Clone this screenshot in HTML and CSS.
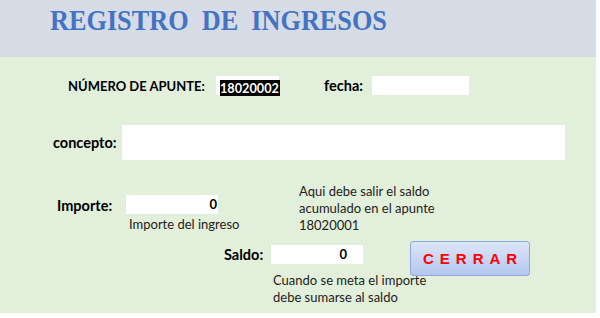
FILE: index.html
```html
<!DOCTYPE html>
<html lang="es">
<head>
    <meta charset="UTF-8">
    <title>Registro de ingresos</title>
    <link rel="stylesheet" href="styles.css">
</head>
<body>
    <div class="sheet">
        <div class="header">
            <h1>REGISTRO&nbsp; DE&nbsp; INGRESOS</h1>
        </div>
        <div class="form">
            <div class="row row-apunte">
                <div class="label apunte-label">NÚMERO DE APUNTE:</div>
                <div class="cell apunte-cell"><span class="selected">18020002</span></div>
                <div class="label fecha-label">fecha:</div>
                <div class="cell fecha-cell"></div>
            </div>
            <div class="row row-concepto">
                <div class="label concepto-label">concepto:</div>
                <div class="cell concepto-cell"></div>
            </div>
            <div class="row row-importe">
                <div class="importe-group">
                    <div class="label importe-label">Importe:</div>
                    <div class="cell num-cell">0</div>
                    <div class="caption importe-caption">Importe del ingreso</div>
                </div>
                <div class="note">Aqui debe salir el saldo<br>acumulado en el apunte<br>18020001</div>
            </div>
            <div class="row row-saldo">
                <div class="saldo-group">
                    <div class="label saldo-label">Saldo:</div>
                    <div class="cell num-cell">0</div>
                    <div class="caption saldo-caption">Cuando se meta el importe<br>debe sumarse al saldo</div>
                </div>
                <button class="close-btn">CERRAR</button>
            </div>
        </div>
    </div>
</body>
</html>
```
FILE: styles.css
```css
body {
    margin: 0;
    padding: 0;
    background-color: #ffffff;
    font-family: Lato, "Open Sans", sans-serif;
    color: #1a1a1a;
}
.sheet {
    width: 596px;
}
.header {
    height: 57px;
    box-sizing: border-box;
    background-color: #d6dce5;
    padding: 3px 0 0 50px;
}
.header h1 {
    margin: 0;
    font-family: "Liberation Serif", serif;
    font-weight: bold;
    font-size: 30px;
    white-space: nowrap;
    color: #4472c4;
    transform: scaleX(0.875);
    transform-origin: left center;
}
.form {
    height: 256px;
    box-sizing: border-box;
    background-color: #e2efda;
    padding-top: 19px;
}
.row {
    display: flex;
}
.label {
    font-weight: bold;
    font-size: 14.5px;
    color: #000;
}
.cell {
    background-color: #fff;
    height: 19px;
    box-sizing: border-box;
}
.caption, .note {
    font-size: 13px;
    line-height: 17px;
    color: #222;
}

/* numero de apunte / fecha */
.row-apunte {
    align-items: center;
    padding-left: 68px;
}
.apunte-label {
    width: 148px;
    font-size: 13px;
}
.apunte-cell {
    width: 63px;
    padding: 1px 0 0 4px;
}
.selected {
    display: inline-block;
    background-color: #000;
    color: #fff;
    font-weight: bold;
    font-size: 12.7px;
    line-height: 16px;
    padding: 0 1px 0 0;
}
.fecha-label {
    margin-left: 45px;
    width: 48px;
}
.fecha-cell {
    width: 97px;
}

/* concepto */
.row-concepto {
    align-items: center;
    margin-top: 30px;
    padding-left: 53px;
}
.concepto-label {
    width: 69px;
}
.concepto-cell {
    width: 443px;
    height: 35px;
}

/* importe */
.row-importe {
    margin-top: 23px;
    align-items: flex-start;
}
.importe-group {
    display: grid;
    grid-template-columns: 69px 92px;
    align-items: center;
    margin-top: 11px;
    padding-left: 57px;
}
.importe-label {
    padding-top: 3px;
}
.num-cell {
    width: 92px;
    text-align: right;
    padding-right: 16px;
    font-weight: bold;
    font-size: 13px;
    line-height: 19px;
    color: #000;
}
.importe-group .num-cell {
    padding-right: 1px;
}
.importe-caption {
    grid-column: 2;
    padding: 2px 0 0 3px;
    white-space: nowrap;
}
.note {
    margin-left: 81px;
}

/* saldo */
.row-saldo {
    margin-top: 7px;
    padding-left: 224px;
    align-items: flex-start;
}
.saldo-group {
    display: grid;
    grid-template-columns: 47px 92px;
    align-items: center;
    margin-top: 4px;
}
.saldo-caption {
    grid-column: 2;
    padding: 8px 0 0 2px;
    white-space: nowrap;
}
.close-btn {
    margin-left: 47px;
    width: 120px;
    height: 35px;
    border: 1px solid #8eaadb;
    border-radius: 3px;
    background: linear-gradient(#dde6f8, #b4c7f0);
    font-family: "Liberation Sans", Arial, sans-serif;
    font-weight: bold;
    font-size: 15px;
    letter-spacing: 6px;
    padding-left: 12px;
    color: #ff0000;
}
```
